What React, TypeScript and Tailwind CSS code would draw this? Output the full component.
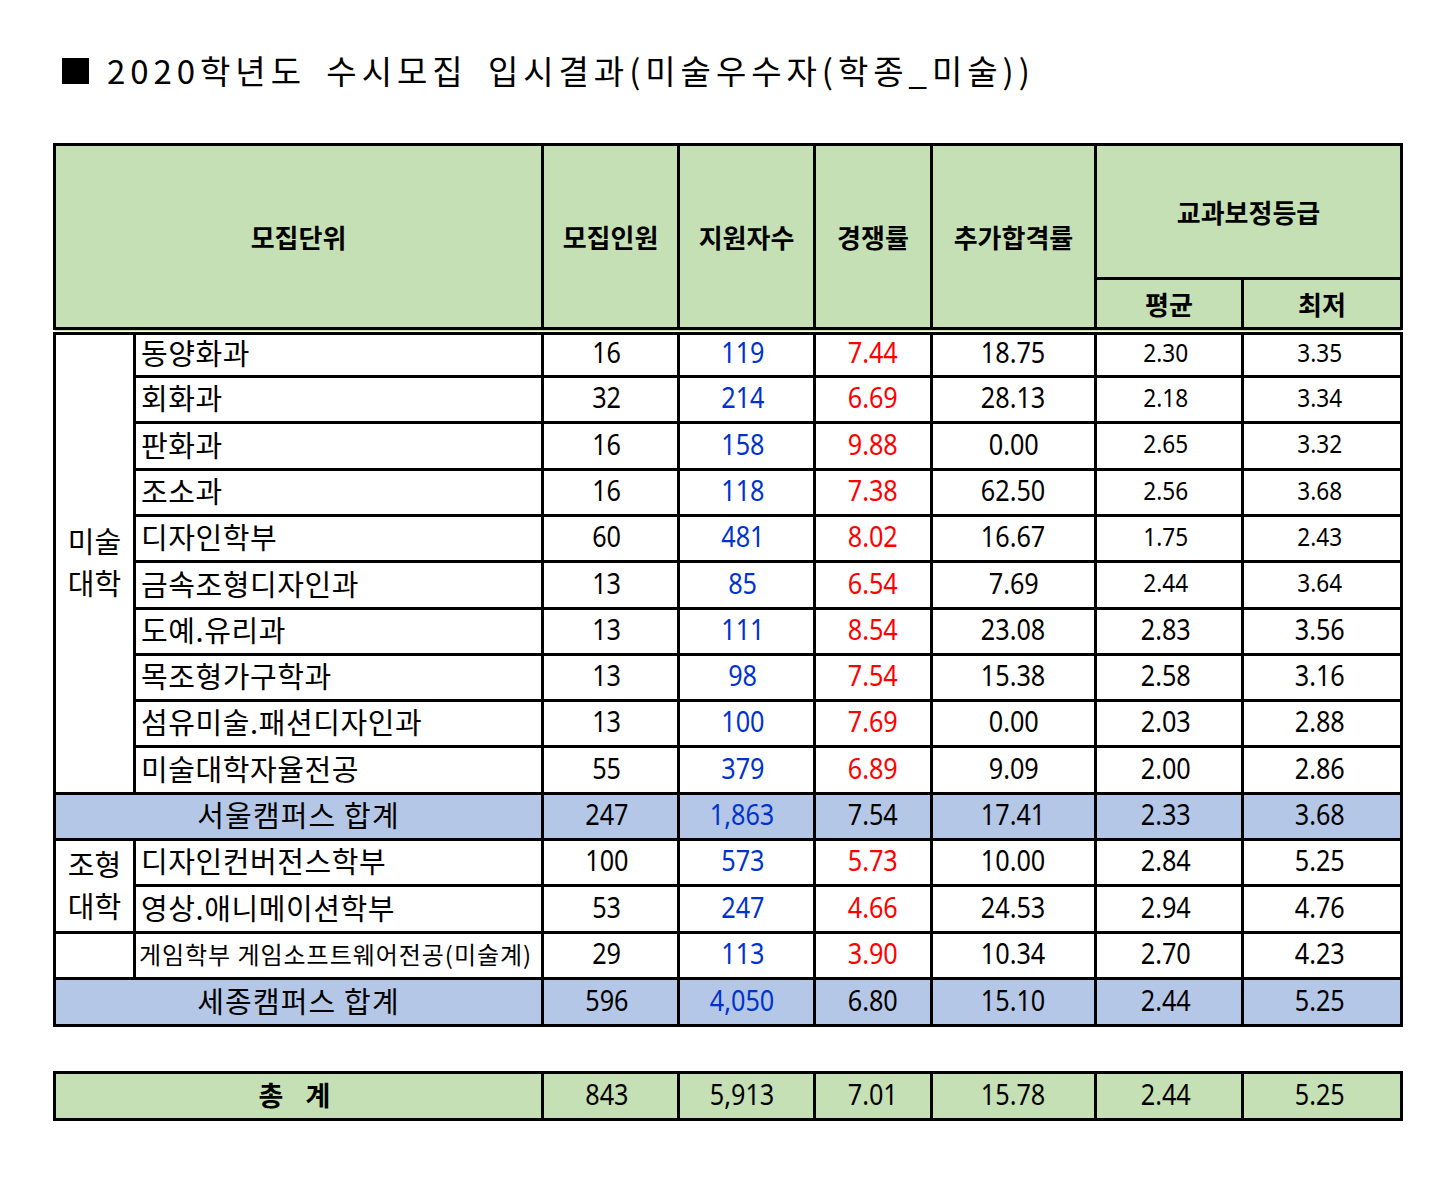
import React from 'react'

type Row = [string, string, string, string, string, string, string]

const seoulRows: Row[] = [
  ['동양화과', '16', '119', '7.44', '18.75', '2.30', '3.35'],
  ['회화과', '32', '214', '6.69', '28.13', '2.18', '3.34'],
  ['판화과', '16', '158', '9.88', '0.00', '2.65', '3.32'],
  ['조소과', '16', '118', '7.38', '62.50', '2.56', '3.68'],
  ['디자인학부', '60', '481', '8.02', '16.67', '1.75', '2.43'],
  ['금속조형디자인과', '13', '85', '6.54', '7.69', '2.44', '3.64'],
  ['도예.유리과', '13', '111', '8.54', '23.08', '2.83', '3.56'],
  ['목조형가구학과', '13', '98', '7.54', '15.38', '2.58', '3.16'],
  ['섬유미술.패션디자인과', '13', '100', '7.69', '0.00', '2.03', '2.88'],
  ['미술대학자율전공', '55', '379', '6.89', '9.09', '2.00', '2.86'],
]
// row heights as the sheet lays them out (rounding of ~46.4px rows)
const seoulHeights = ['h-[46px]', 'h-[46px]', 'h-[47px]', 'h-[46px]', 'h-[46px]', 'h-[47px]', 'h-[46px]', 'h-[46px]', 'h-[46px]', 'h-[47px]']

const sejongRows: Row[] = [
  ['디자인컨버전스학부', '100', '573', '5.73', '10.00', '2.84', '5.25'],
  ['영상.애니메이션학부', '53', '247', '4.66', '24.53', '2.94', '4.76'],
]
const sejongHeights = ['h-[46px]', 'h-[47px]']

const gameRow: Row = ['게임학부 게임소프트웨어전공(미술계)', '29', '113', '3.90', '10.34', '2.70', '4.23']

const seoulTotal: Row = ['서울캠퍼스 합계', '247', '1,863', '7.54', '17.41', '2.33', '3.68']
const sejongTotal: Row = ['세종캠퍼스 합계', '596', '4,050', '6.80', '15.10', '2.44', '5.25']
const grandTotal: Row = ['총 계', '843', '5,913', '7.01', '15.78', '2.44', '5.25']

const cell = 'border-[3px] border-black p-0'
const green = 'bg-[#c5e0b4]'
const blue = 'bg-[#b4c7e7]'
// header cells sitting on the double rule
const head = `${cell} ${green} text-center text-[26px] font-bold`
const headLast = `${head} border-b-[8px] [border-bottom-style:double]`
const name = `${cell} pl-[5px] pb-[4px] text-[29px] leading-none tracking-[0.02em] whitespace-nowrap`

function Num({ value, color = 'text-black', small = false }: { value: string; color?: string; small?: boolean }) {
  return (
    <span
      className={`inline-block font-['Noto_Sans',sans-serif] scale-x-[0.87] ${small ? 'text-[26px]' : 'text-[29px]'} leading-none ${color}`}
    >
      {value}
    </span>
  )
}

function NumCells({ row, kind, small = false }: { row: Row; kind: 'data' | 'sum' | 'total'; small?: boolean }) {
  const bg = kind === 'sum' ? blue : kind === 'total' ? green : ''
  const td = `${cell} ${bg} pb-[4px] text-center`
  return (
    <>
      <td className={`${td} pr-[8px]`}>
        <Num value={row[1]} />
      </td>
      <td className={`${td} pr-[8px]`}>
        <Num value={row[2]} color={kind === 'total' ? 'text-black' : 'text-[#0033cc]'} />
      </td>
      <td className={td}>
        <Num value={row[3]} color={kind === 'data' ? 'text-[#ff0000]' : 'text-black'} />
      </td>
      <td className={td}>
        <Num value={row[4]} />
      </td>
      <td className={`${td} pr-[6px]`}>
        <Num value={row[5]} small={small} />
      </td>
      <td className={`${td} pr-[5px]`}>
        <Num value={row[6]} small={small} />
      </td>
    </>
  )
}

function Columns() {
  return (
    <colgroup>
      <col className="w-[80px]" />
      <col className="w-[408px]" />
      <col className="w-[136px]" />
      <col className="w-[136px]" />
      <col className="w-[117px]" />
      <col className="w-[164px]" />
      <col className="w-[147px]" />
      <col className="w-[159px]" />
    </colgroup>
  )
}

export default function App() {
  return (
    <div className="min-h-[1181px] w-[1445px] bg-white font-['Noto_Sans_CJK_KR',sans-serif] text-black">
      <div className="pl-[62px] pt-[54px]">
        <h1 className="flex items-center gap-[18px] text-[33px] font-normal leading-none tracking-[0.15em] [word-spacing:8px]">
          <span className="inline-block h-[26px] w-[27px] bg-black" />
          <span>2020학년도 수시모집 입시결과(미술우수자(학종_미술))</span>
        </h1>
      </div>

      <div className="pl-[53px] pt-[56px]">
        <table className="table-fixed border-collapse w-[1347px]">
          <Columns />
          <tbody>
            <tr className="h-[134px]">
              <td colSpan={2} rowSpan={2} className={headLast}>
                모집단위
              </td>
              <td rowSpan={2} className={headLast}>
                모집인원
              </td>
              <td rowSpan={2} className={headLast}>
                지원자수
              </td>
              <td rowSpan={2} className={headLast}>
                경쟁률
              </td>
              <td rowSpan={2} className={headLast}>
                추가합격률
              </td>
              <td colSpan={2} className={head}>
                교과보정등급
              </td>
            </tr>
            <tr className="h-[52px]">
              <td className={headLast}>평균</td>
              <td className={headLast}>최저</td>
            </tr>

            {seoulRows.map((row, i) => (
              <tr key={row[0]} className={seoulHeights[i]}>
                {i === 0 && (
                  <td rowSpan={10} className={`${cell} pb-[4px] text-center text-[29px] leading-[42px]`}>
                    미술
                    <br />
                    대학
                  </td>
                )}
                <td className={name}>{row[0]}</td>
                <NumCells row={row} kind="data" small={i < 6} />
              </tr>
            ))}

            <tr className="h-[46px]">
              <td colSpan={2} className={`${cell} ${blue} pb-[4px] text-center text-[29px] leading-none tracking-[0.04em]`}>
                {seoulTotal[0]}
              </td>
              <NumCells row={seoulTotal} kind="sum" />
            </tr>

            {sejongRows.map((row, i) => (
              <tr key={row[0]} className={sejongHeights[i]}>
                {i === 0 && (
                  <td rowSpan={2} className={`${cell} pb-[4px] text-center text-[29px] leading-[42px]`}>
                    조형
                    <br />
                    대학
                  </td>
                )}
                <td className={name}>{row[0]}</td>
                <NumCells row={row} kind="data" />
              </tr>
            ))}

            <tr className="h-[46px]">
              <td className={cell} />
              <td className={`${cell} pl-[3px] pb-[4px] text-[24px] leading-none tracking-[0.04em] whitespace-nowrap`}>{gameRow[0]}</td>
              <NumCells row={gameRow} kind="data" />
            </tr>

            <tr className="h-[47px]">
              <td colSpan={2} className={`${cell} ${blue} pb-[4px] text-center text-[29px] leading-none tracking-[0.04em]`}>
                {sejongTotal[0]}
              </td>
              <NumCells row={sejongTotal} kind="sum" />
            </tr>
          </tbody>
        </table>
      </div>

      <div className="pl-[53px] pt-[44px]">
        <table className="table-fixed border-collapse w-[1347px]">
          <Columns />
          <tbody>
            <tr className="h-[47px]">
              <td colSpan={2} className={`${cell} ${green} pb-[4px] text-center text-[27px] font-bold leading-none tracking-[0.3em]`}>
                {grandTotal[0]}
              </td>
              <NumCells row={grandTotal} kind="total" />
            </tr>
          </tbody>
        </table>
      </div>
    </div>
  )
}
